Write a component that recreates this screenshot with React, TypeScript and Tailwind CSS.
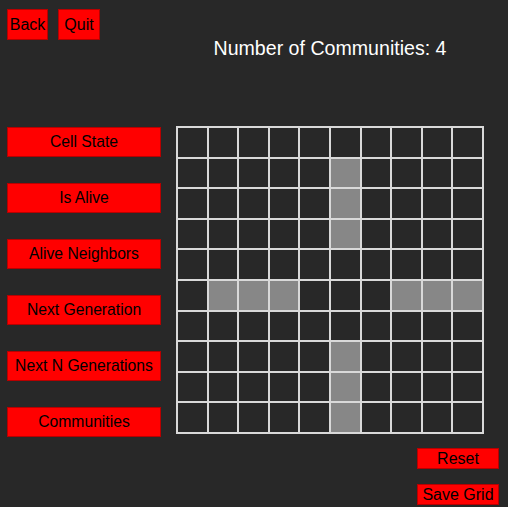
import { useState } from 'react';

const SIZE = 10;

const initialAlive = (): boolean[][] => {
  const g = Array.from({ length: SIZE }, () => Array(SIZE).fill(false));
  [1, 2, 3, 7, 8, 9].forEach((r) => (g[r][5] = true));
  [1, 2, 3, 7, 8, 9].forEach((c) => (g[5][c] = true));
  return g;
};

const sideButtons = [
  'Cell State',
  'Is Alive',
  'Alive Neighbors',
  'Next Generation',
  'Next N Generations',
  'Communities',
];

const App = () => {
  const [grid, setGrid] = useState<boolean[][]>(initialAlive);

  const toggle = (r: number, c: number) => {
    setGrid((g) => g.map((row, ri) => row.map((v, ci) => (ri === r && ci === c ? !v : v))));
  };

  return (
    <div className="w-[508px] h-[507px] bg-[#282828] font-['Liberation_Sans',Arial,sans-serif] flex flex-col overflow-hidden">
      <div className="flex">
        {/* Left column */}
        <div className="w-[176px] pl-[7px] pt-[9px] flex flex-col">
          <div className="flex gap-[10px]">
            <button className="w-[41px] h-[31px] bg-[#ff0000] border border-[#b80000] text-black text-[16px] leading-none">
              Back
            </button>
            <button className="w-[42px] h-[31px] bg-[#ff0000] border border-[#b80000] text-black text-[16px] leading-none">
              Quit
            </button>
          </div>
          <div className="mt-[87px] flex flex-col gap-[26px]">
            {sideButtons.map((label) => (
              <button
                key={label}
                className="w-[154px] h-[30px] bg-[#ff0000] border border-[#b80000] text-black text-[15.7px] leading-none"
              >
                {label}
              </button>
            ))}
          </div>
        </div>

        {/* Right column */}
        <div className="flex flex-col w-[308px]">
          <div className="mt-[38px] h-[20px] text-white text-[19.6px] leading-[20px] text-center whitespace-nowrap">
            Number of Communities: 4
          </div>
          <div className="mt-[68px] w-[308px] h-[308px] bg-[#d9d9d9] p-[2px] gap-[2px] grid grid-cols-10 grid-rows-10">
            {grid.map((row, r) =>
              row.map((alive, c) => (
                <div
                  key={`${r}-${c}`}
                  onClick={() => toggle(r, c)}
                  className={alive ? 'bg-[#878787]' : 'bg-[#282828]'}
                />
              ))
            )}
          </div>
        </div>
      </div>

      <div className="mt-[11px] pr-[9px] flex flex-col items-end gap-[15px]">
        <button className="w-[82px] h-[21px] bg-[#ff0000] border border-[#b80000] text-black text-[16px] leading-none">
          Reset
        </button>
        <button className="w-[82px] h-[21px] bg-[#ff0000] border border-[#b80000] text-black text-[16px] leading-none">
          Save Grid
        </button>
      </div>
    </div>
  );
};

export default App;
